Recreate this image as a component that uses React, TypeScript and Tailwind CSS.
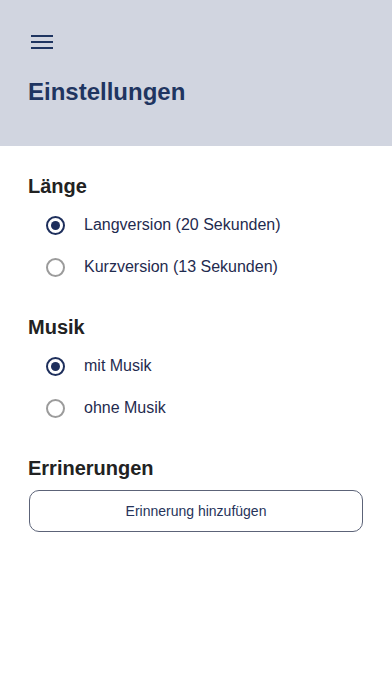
import React, { useState } from "react";

function Radio({ checked, label, onClick }: { checked: boolean; label: string; onClick: () => void }) {
  return (
    <button type="button" onClick={onClick} className="flex h-[42px] w-full items-center pl-[18px] text-left">
      {checked ? (
        <span className="flex h-[19px] w-[19px] items-center justify-center rounded-full border-2 border-[#1e2f5c]">
          <span className="h-[9px] w-[9px] rounded-full bg-[#1e2f5c]" />
        </span>
      ) : (
        <span className="h-[19px] w-[19px] rounded-full border-2 border-[#9b9b9b]" />
      )}
      <span className="ml-[19px] text-[16px] leading-[20px] text-[#1f2b4f]">{label}</span>
    </button>
  );
}

export default function App() {
  const [len, setLen] = useState(0);
  const [music, setMusic] = useState(0);
  return (
    <div className="min-h-[696px] w-full bg-white" style={{ fontFamily: '"Liberation Sans", Arial, sans-serif' }}>
      <header className="h-[146px] bg-[#d1d5e0] px-[28px] pt-[35px]">
        <div className="ml-[3px] flex w-[22px] flex-col gap-[4px]">
          <span className="h-[2px] w-full bg-[#1f3561]" />
          <span className="h-[2px] w-full bg-[#1f3561]" />
          <span className="h-[2px] w-full bg-[#1f3561]" />
        </div>
        <h1 className="mt-[29px] text-[24px] font-bold leading-[28px] text-[#1f3561]">Einstellungen</h1>
      </header>
      <main className="px-[28px] pt-[28px]">
        <h2 className="text-[20px] font-bold leading-[24px] text-[#222222]">Länge</h2>
        <div className="mt-[6px]">
          <Radio checked={len === 0} label="Langversion (20 Sekunden)" onClick={() => setLen(0)} />
          <Radio checked={len === 1} label="Kurzversion (13 Sekunden)" onClick={() => setLen(1)} />
        </div>
        <h2 className="mt-[27px] text-[20px] font-bold leading-[24px] text-[#222222]">Musik</h2>
        <div className="mt-[6px]">
          <Radio checked={music === 0} label="mit Musik" onClick={() => setMusic(0)} />
          <Radio checked={music === 1} label="ohne Musik" onClick={() => setMusic(1)} />
        </div>
        <h2 className="mt-[27px] text-[20px] font-bold leading-[24px] text-[#222222]">Errinerungen</h2>
        <button
          type="button"
          className="mx-[1px] mt-[10px] flex h-[42px] w-[calc(100%-2px)] items-center justify-center rounded-[10px] border border-[#5c6378] text-[14px] text-[#26335a]"
        >
          Erinnerung hinzufügen
        </button>
      </main>
    </div>
  );
}
